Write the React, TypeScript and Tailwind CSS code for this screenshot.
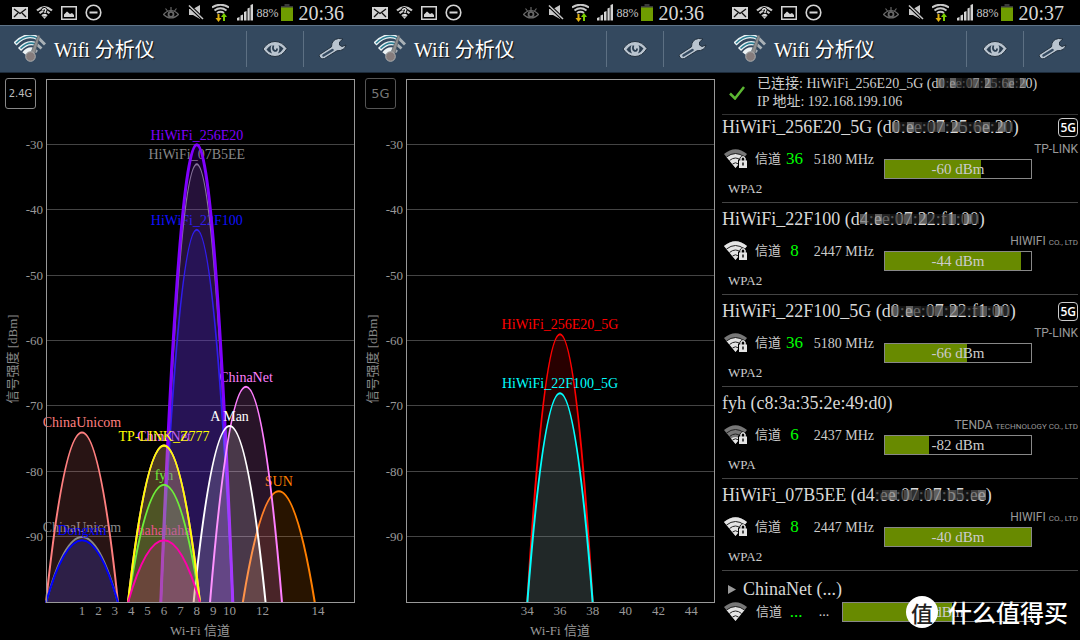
type AP = { ssid: string; ch: number; level: number; color: string; width?: number; front?: boolean };

const APS24: AP[] = [
  { ssid: "HiWiFi_22F100", ch: 8, level: -43, color: "#1010ff" },
  { ssid: "HiWiFi_07B5EE", ch: 8, level: -33, color: "#888888" },
  { ssid: "HiWiFi_256E20", ch: 8, level: -30, color: "#8000ff", width: 3 },
  { ssid: "SUN", ch: 13, level: -83, color: "#ff7f00" },
  { ssid: "ChinaNet", ch: 11, level: -67, color: "#ff7fff" },
  { ssid: "A Man", ch: 10, level: -73, color: "#ffffff", front: true },
  { ssid: "ChinaUnicom", ch: 1, level: -74, color: "#ff7f7f" },
  { ssid: "fyh", ch: 6, level: -82, color: "#33ff22" },
  { ssid: "ChinaNet", ch: 6, level: -76, color: "#ff7fff" },
  { ssid: "TP-LINK_Z777", ch: 6, level: -76, color: "#ffff00", front: true },
  { ssid: "ChinaUnicom", ch: 1, level: -90, color: "#888888" },
  { ssid: "Dongxin", ch: 1, level: -90.5, color: "#0000ff", front: true },
  { ssid: "hahahaha", ch: 6, level: -90.5, color: "#ff00aa" },
];

const APS5: AP[] = [
  { ssid: "HiWiFi_256E20_5G", ch: 36, level: -59, color: "#ff0000" },
  { ssid: "HiWiFi_22F100_5G", ch: 36, level: -68, color: "#00ffff", front: true },
];

const NETWORKS = [
  { name: "HiWiFi_256E20_5G", mac: ["d", "0:ee:07:25:6e:20"], ch: "36", freq: 5180, sec: "WPA2", level: -60, fill: 66, bars: 3, vendor: "TP-LINK", suffix: "", is5: true },
  { name: "HiWiFi_22F100", mac: ["d", "4:ee:07:22:f1:00"], ch: "8", freq: 2447, sec: "WPA2", level: -44, fill: 93, bars: 4, vendor: "HIWIFI", suffix: "CO., LTD", is5: false },
  { name: "HiWiFi_22F100_5G", mac: ["d", "0:ee:07:22:f1:00"], ch: "36", freq: 5180, sec: "WPA2", level: -66, fill: 56, bars: 3, vendor: "TP-LINK", suffix: "", is5: true },
  { name: "fyh", mac: ["c8:3a:35:2e:49:d0", ""], ch: "6", freq: 2437, sec: "WPA", level: -82, fill: 30, bars: 1, vendor: "TENDA", suffix: "TECHNOLOGY CO., LTD", is5: false },
  { name: "HiWiFi_07B5EE", mac: ["d4", ":ee:07:07:b5:ee"], ch: "8", freq: 2447, sec: "WPA2", level: -40, fill: 100, bars: 4, vendor: "HIWIFI", suffix: "CO., LTD", is5: false },
];

function StatusBar({ time }: { time: string }) {
  return (
    <div className="flex h-[25px] items-center bg-black pr-4 pl-3">
      <div className="flex items-center gap-2">
        <svg width="16" height="12" viewBox="0 0 16 12">
          <rect width="16" height="12" fill="#d4d4d4" />
          <path d="M2 2l6 4.5L14 2M2 10l4-4M14 10l-4-4" fill="none" stroke="#111" strokeWidth="1.3" />
        </svg>
        <svg width="17" height="13" viewBox="0 0 17 13">
          <path d="M1 4.5Q8.500-2 16 4.500M3.500 7.300Q8.500 2.500 13.500 7.300M6 10Q8.500 8 11 10" fill="none" stroke="#c8c8c8" strokeWidth="2.200" />
          <path d="M8.500 13l-2-2.500h4z" fill="#c8c8c8" />
          <path d="M6.500 4Q7 2.500 8.700 2.700Q11 3.500 9 5.500V7" fill="none" stroke="#000" strokeWidth="3.200" />
          <path d="M6.500 4Q7 2.500 8.700 2.700Q11 3.500 9 5.500V7M9 8.300v1.500" fill="none" stroke="#eee" strokeWidth="1.400" />
        </svg>
        <svg width="16" height="14" viewBox="0 0 16 14">
          <rect x="0.750" y="0.750" width="14.500" height="12.500" fill="none" stroke="#d4d4d4" strokeWidth="1.500" />
          <path d="M3 11V8.500l3-3 3 2.500 2-1 2 2V11z" fill="#d4d4d4" />
        </svg>
        <svg width="17" height="17" viewBox="0 0 17 17">
          <circle cx="8.500" cy="8.500" r="7.300" fill="none" stroke="#d4d4d4" strokeWidth="1.600" />
          <path d="M4.500 8.500h8" stroke="#d4d4d4" strokeWidth="2" />
        </svg>
      </div>
      <div className="ml-auto flex items-center">
        <svg className="mr-[9px]" width="16" height="12" viewBox="0 0 16 12">
          <path d="M.5 7.500Q4 3.500 8 3.500T15.500 7.500Q12 11 8 11T.5 7.500z" fill="none" stroke="#686868" strokeWidth="1.200" />
          <circle cx="8" cy="7.300" r="2.500" fill="none" stroke="#686868" strokeWidth="1.800" />
          <path d="M8 0v3M2.500 1.500l2 2.500M13.500 1.500l-2 2.500" stroke="#686868" strokeWidth="1.200" />
        </svg>
        <svg className="mr-2" width="16" height="15" viewBox="0 0 16 15">
          <path d="M1 4h4l7-4v14l-7-4H1z" fill="#c8c8c8" />
          <path d="M1 .5L15 14" stroke="#000" strokeWidth="3.500" />
          <path d="M1 .5L15 14" stroke="#c8c8c8" strokeWidth="1.500" />
        </svg>
        <svg className="mr-2" width="17" height="18" viewBox="0 0 17 18">
          <path d="M0 3.500Q8.500-2 17 3.500M2.500 6.500Q8.500 2 14.500 6.500M5 9Q8.500 6.500 12 9" fill="none" stroke="#c8c8c8" strokeWidth="2" />
          <path d="M5.500 10v4H3.500l3 4 3-4h-2v-4z" fill="#e0b010" />
          <path d="M11 17v-4H9l3-4 3 4h-2v4z" fill="#7bd000" />
        </svg>
        <svg className="mr-[3px]" width="16" height="17" viewBox="0 0 16 17">
          <path d="M0 16.500V14l2.500-1v3.500zM3.500 16.500V11.500L6 10.500v6zM7 16.500V8l2.500-1v9.500zM10.500 16.500V4.500l2.200-1v13zM13.500 16.500V1L16 0v16.500z" fill="#d4d4d4" />
        </svg>
        <span className="mr-[3px] text-[12px] text-[#c4c4c4]">88%</span>
        <svg className="mr-[5px]" width="12" height="17" viewBox="0 0 12 17">
          <path d="M3.500 0h5v2H12v3H0V2h3.500z" fill="#3a3a3a" />
          <path d="M0 3.500h12V17H0z" fill="#6f9c00" />
        </svg>
        <span className="text-[20px] leading-none text-[#d8d8d8]">{time}</span>
      </div>
    </div>
  );
}

function Logo() {
  return (
    <svg width="32" height="28" viewBox="0 0 32 28">
      <g fill="none">
        <path d="M25 3.500L31 9.500M23 9.500L27.500 13.500M20 14.500L23 17" stroke="#a9b1b6" strokeWidth="3" />
        <path d="M1 9Q13-3.500 25 4M5.500 14.500Q14 5 23 9.500M10 18.500Q14.500 13 20 15" stroke="#edf3f5" strokeWidth="4.200" />
        <path d="M2 8.300Q13-2.500 23.500 3.300M6.500 13.500Q14 6 21.500 9" stroke="#2c7f93" strokeWidth="1.600" />
      </g>
      <path d="M24 0L26 .8l-5.500 18.700-4-1z" fill="#8d8d8d" stroke="#4d5862" strokeWidth=".6" />
      <circle cx="16.500" cy="21.500" r="4.800" fill="#857c7c" stroke="#aeb0b0" strokeWidth="1" />
    </svg>
  );
}

function Header() {
  return (
    <header className="flex h-[48px] items-center border-t border-b border-t-[#5f7488] border-b-[#1d2b3a] bg-[#34495f] pl-[14px]">
      <Logo />
      <h1 className="ml-2 pt-px text-[20px] text-white [text-shadow:1px_1px_1px_#111]">Wifi 分析仪</h1>
      <button aria-label="view" className="ml-auto flex h-9 w-[57px] items-center justify-center border-l border-[#5d7083]">
        <svg width="26" height="18" viewBox="0 0 26 18">
          <path d="M1 9Q6 1.500 13 1.500T25 8.500Q20 16.500 13 16.500T1 9z" fill="#b9c4cf" stroke="#22303e" strokeWidth="1" />
          <path d="M4.500 9.500Q6.500 6.500 9.500 5Q7.500 9.500 10 13.500Q6.500 12.500 4.500 9.500zM16.500 5Q20 6.500 21.500 8.500Q19.500 12 16 13.500Q18.500 9 16.500 5z" fill="#2c3f52" />
          <path d="M11.500 5.500Q10 9 12.500 10.800Q15 11.500 15 8.500" fill="none" stroke="#2c3f52" strokeWidth="1.800" />
        </svg>
      </button>
      <button aria-label="settings" className="flex h-9 w-[57px] items-center justify-center border-l border-[#5d7083]">
        <svg width="30" height="24" viewBox="0 0 30 24">
          <path d="M2.500 17.500L14.500 9.800Q14.500 2.500 21.500 1.500L26 2L22.500 5V8L25 9.500L29 8Q27.500 14 20 13.800L7.500 21.500Q4.500 22.800 3 20.500Q1.500 18.500 2.500 17.500z" fill="#b9c4cf" stroke="#22303e" strokeWidth="1" />
          <path d="M6.500 18.500L15.500 13" stroke="#34495f" strokeWidth="2.500" strokeLinecap="round" />
        </svg>
      </button>
    </header>
  );
}

function Graph({ band, on, aps, ticks, xOf, half }: { band: string; on: boolean; aps: AP[]; ticks: number[]; xOf: (ch: number) => number; half: number }) {
  const yOf = (level: number) => 529.5 - (level + 100) * 6.54;
  const label = (a: AP, i: number) => (
    <text key={i} x={xOf(a.ch)} y={yOf(a.level) - 5} textAnchor="middle" fontSize="14" fill={a.color}>
      {a.ssid}
    </text>
  );
  return (
    <div className="relative">
      <button
        className={`absolute top-[5px] left-[5px] h-[31px] w-[31px] rounded-[3px] border font-['DejaVu_Sans'] ${on ? "border-[#888] text-[10px] text-[#bbb]" : "border-[#555] text-[13px] text-[#777]"}`}
      >
        {band}
      </button>
      <svg viewBox="0 0 360 567" className="block h-auto w-full" fontSize="13">
        {[-30, -40, -50, -60, -70, -80, -90].map((v) => (
          <g key={v}>
            <path d={`M46 ${Math.round(yOf(v)) - 0.5}H354`} stroke="#444" />
            <text x="43" y={yOf(v) + 4} textAnchor="end" fill="#999">{v}</text>
          </g>
        ))}
        <text transform="translate(17 286) rotate(-90)" textAnchor="middle" fill="#888">信号强度 [dBm]</text>
        {aps.filter((a) => !a.front).map(label)}
        {aps.map((a, i) => {
          const x = xOf(a.ch);
          const y = yOf(a.level);
          return (
            <path
              key={i}
              d={`M${x - half} 529.5Q${x} ${2 * y - 529.5} ${x + half} 529.5`}
              fill={a.color}
              fillOpacity="0.157"
              stroke={a.color}
              strokeWidth={a.width ?? 2}
            />
          );
        })}
        {aps.filter((a) => a.front).map(label)}
        <rect x="46.500" y="6.500" width="308" height="523" fill="none" stroke="#999" />
        {ticks.map((t) => (
          <text key={t} x={t === 14 ? 318 : xOf(t)} y="542" textAnchor="middle" fill="#999">{t}</text>
        ))}
        <text x="200" y="562" textAnchor="middle" fill="#999">Wi-Fi 信道</text>
      </svg>
    </div>
  );
}

function Signal({ bars, lock }: { bars: number; lock?: boolean }) {
  const scale = [0, 7, 10, 14, 22][bars];
  return (
    <svg className="shrink-0" width="24" height="20" viewBox="0 0 24 20">
      <clipPath id={`sig${bars}`}>
        <circle cx="11.500" cy="19" r={scale} />
      </clipPath>
      <path d="M0 5Q11.500-4.500 23 5L11.500 19z" fill="#777" />
      <path d="M0 5Q11.500-4.500 23 5L11.500 19z" fill="#e4e4e4" clipPath={`url(#sig${bars})`} />
      <path d="M2.500 8Q11.500 1 20.500 8M5.500 11.500Q11.500 6.500 17.500 11.500M8.500 15Q11.500 12.500 14.500 15" fill="none" stroke="#222" strokeWidth="1" />
      {lock && (
        <>
          <path d="M14 10.500h10V20H14zM15.500 11V9Q19 4 22.500 9v2z" fill="#000" />
          <path d="M15 11.500h8V19h-8z" fill="#e4e4e4" />
          <path d="M17 12V9.500Q19 6 21 9.500V12" fill="none" stroke="#e4e4e4" strokeWidth="1.500" />
          <path d="M19 13.500v3" stroke="#111" strokeWidth="1.500" />
        </>
      )}
    </svg>
  );
}

const MOSAIC = ["bg-[#777]", "bg-[#444]", "bg-[#666]", "bg-[#333]", "bg-[#888]", "bg-[#555]"];

// pixelates the middle of a MAC address
function Masked({ children }: { children: string }) {
  return (
    <span className="relative">
      {children}
      <span className="absolute inset-x-0 top-1/2 flex h-[10px] -translate-y-1/2 opacity-70">
        {children.split("").map((c, i) => (
          <span key={i} className={`flex-1 ${c === ":" ? "bg-[#1a1a1a]" : MOSAIC[(i * 5) % 6]}`} />
        ))}
      </span>
    </span>
  );
}

function LevelBar({ level, fill }: { level: string; fill: number }) {
  return (
    <div className="relative h-5 border border-[#888]">
      <div className="h-full bg-[#688a00]" style={{ width: `${fill}%` }} />
      <span className="absolute inset-0 text-center text-[15px] leading-[19px] text-[#ccc]">{level}</span>
    </div>
  );
}

function NetworkList() {
  return (
    <div className="px-[2px] text-[#ccc]">
      <div className="flex h-[42px] items-center border-b border-[#333] pb-[2px] pl-[7px]">
        <svg width="16" height="14" viewBox="0 0 16 14">
          <path d="M1 7.500l5 5L15 1" fill="none" stroke="#5cb832" strokeWidth="2.500" />
        </svg>
        <div className="ml-3 text-[14px] leading-[18px] whitespace-nowrap">
          <p>已连接: HiWiFi_256E20_5G (d<Masked>0:ee:07:25:6e:2</Masked>0)</p>
          <p>IP 地址: 192.168.199.106</p>
        </div>
      </div>
      <div className="-mt-1">
        {NETWORKS.map((n) => (
          <div key={n.name} className="h-[92px] border-b border-[#444] pt-1">
            <div className="flex h-6 items-center justify-between">
              <p className="text-[18px] whitespace-nowrap text-[#d8d8d8]">
                {n.name} ({n.mac[0]}
                {n.mac[1] && <Masked>{n.mac[1]}</Masked>})
              </p>
              {n.is5 && <span className="rounded-[4px] border border-[#ccc] px-px font-['Open_Sans'] text-[12px] leading-[17px] font-semibold text-white">5G</span>}
            </div>
            <div className="flex h-10">
              <div className="flex w-[162px] items-center pl-[2px]">
                <Signal bars={n.bars} lock />
                <span className="ml-[7px] text-[13px]">信道</span>
                <span className="w-[27px] text-center text-[17px] text-[#0f0]">{n.ch}</span>
                <span className="ml-auto pr-[10px] text-[14px] whitespace-nowrap">{n.freq} MHz</span>
              </div>
              <div className="flex-1">
                <p className="h-5 text-right font-['Roboto'] text-[12px] leading-5 whitespace-nowrap text-[#999]">
                  {n.vendor} <span className="text-[8px]">{n.suffix}</span>
                </p>
                <div className="w-[148px]">
                  <LevelBar level={`${n.level} dBm`} fill={n.fill} />
                </div>
              </div>
            </div>
            <p className="pl-[6px] text-[13px] leading-5">{n.sec}</p>
          </div>
        ))}
      </div>
      <p className="flex h-7 items-center gap-[6px] pt-2 pl-[6px] text-[18px] text-[#d8d8d8]">
        <svg width="9" height="9" viewBox="0 0 9 9">
          <path d="M0 0l8 4.500L0 9z" fill="#999" />
        </svg>
        ChinaNet (...)
      </p>
      <div className="flex items-center pl-[2px]">
        <Signal bars={3} />
        <span className="ml-2 text-[13px]">信道</span>
        <span className="w-7 text-center text-[17px] text-[#0f0]">...</span>
        <span className="w-7 text-center text-[14px]">...</span>
        <div className="ml-1 w-[190px]">
          <LevelBar level="-67 dBm" fill={58} />
        </div>
      </div>
    </div>
  );
}

export default function App() {
  return (
    <div className="relative min-h-screen overflow-hidden bg-black font-['Liberation_Serif','Noto_Sans_CJK_SC',serif]">
      <div className="grid grid-cols-3">
        <section>
          <StatusBar time="20:36" />
          <Header />
          <Graph band="2.4G" on aps={APS24} ticks={[1, 2, 3, 4, 5, 6, 7, 8, 9, 10, 12, 14]} xOf={(c) => 82 + (c - 1) * 16.4} half={36} />
        </section>
        <section>
          <StatusBar time="20:36" />
          <Header />
          <Graph band="5G" on={false} aps={APS5} ticks={[34, 36, 38, 40, 42, 44]} xOf={(c) => 200 + (c - 36) * 16.4} half={32.7} />
        </section>
        <section className="min-w-0">
          <StatusBar time="20:37" />
          <Header />
          <NetworkList />
        </section>
      </div>
      <div className="absolute right-3 bottom-3 flex items-center gap-[10px] font-['Noto_Sans_CJK_SC',sans-serif] text-[24px] leading-8 font-medium text-white">
        <span className="flex h-8 w-8 items-center justify-center rounded-full bg-white text-[22px] text-[#222]">值</span>
        什么值得买
      </div>
    </div>
  );
}
